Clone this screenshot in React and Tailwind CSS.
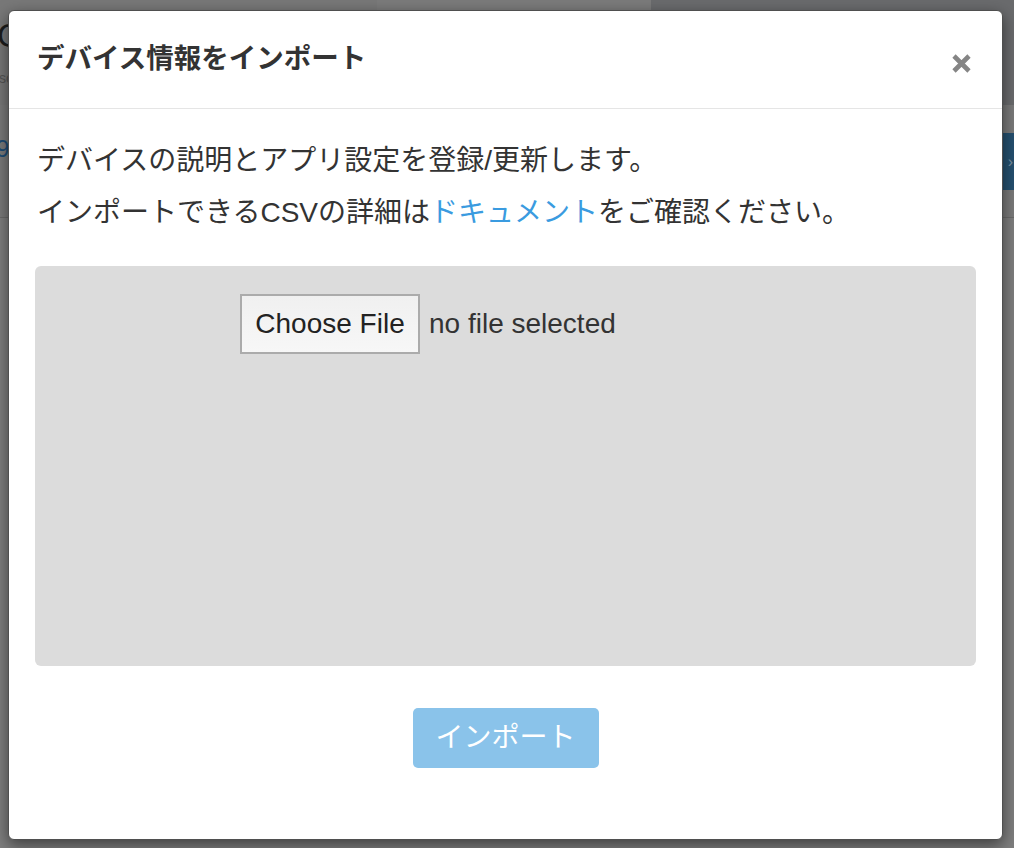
import React from "react";

const jp = "font-['Liberation_Sans','Noto_Sans_CJK_JP',sans-serif]";

function CloseIcon() {
  return (
    <svg width="21" height="21" viewBox="0 0 21 21" aria-hidden="true">
      <path d="M3 3 L18 18 M18 3 L3 18" stroke="#858585" strokeWidth="4.6" strokeLinecap="butt" />
    </svg>
  );
}

function BackdropPage() {
  return (
    <div className={`flex h-full w-full flex-col bg-[#7c7c7c] ${jp}`}>
      {/* top header strip */}
      <div className="flex h-[105px] shrink-0">
        <div className="flex w-[377px] flex-col bg-[#787878] pt-[18px]">
          <span className="-ml-[3px] text-[34px] leading-[34px] text-[#1c1c1c]">C</span>
          <span className="-ml-[1px] mt-[18px] text-[14px] leading-[16px] text-[#555]">sc</span>
        </div>
        <div className="w-[274px] bg-[#7b7b7b]" />
        <div className="flex-1 bg-[#6a6b6d]" />
      </div>
      {/* toolbar row */}
      <div className="flex h-[113px] shrink-0 items-start justify-between border-b border-[#6a6a6a] bg-[#7a7a7a]">
        <span className="-ml-[4px] mt-[29px] text-[24px] leading-[30px] text-[#1d4d75]">9</span>
        <div className="mt-[28px] flex h-[57px] w-[60px] items-center justify-end bg-[#25506f] pr-[1px] text-[16px] text-[#7a8fa0]">
          ›
        </div>
      </div>
      <div className="flex-1 bg-[#7e7e7e]" />
    </div>
  );
}

function ImportModal() {
  return (
    <div
      className={`absolute left-[8px] top-[10px] flex h-[830px] w-[995px] flex-col rounded-[6px] border border-[#4f4f4f] bg-white shadow-[0_5px_15px_rgba(0,0,0,0.5)] ${jp}`}
    >
      {/* header */}
      <div className="flex h-[98px] shrink-0 items-start justify-between border-b border-[#e5e5e5] pl-[28px] pr-[30px]">
        <h4 className="mt-[28px] text-[27.5px] font-bold leading-[40px] text-[#333]">
          デバイス情報をインポート
        </h4>
        <button className="mt-[42px] flex h-[21px] w-[21px] items-center justify-center">
          <CloseIcon />
        </button>
      </div>

      {/* body */}
      <div className="flex flex-col px-[26px] pt-[26px]">
        <p className="pl-[2px] text-[28px] leading-[52px] text-[#333]">
          デバイスの説明とアプリ設定を登録/更新します。
        </p>
        <p className="pl-[2px] text-[28px] leading-[52px] text-[#333]">
          インポートできるCSVの詳細は
          <a className="text-[#3a9be0]">ドキュメント</a>
          をご確認ください。
        </p>

        <div className="mt-[27px] h-[400px] rounded-[6px] bg-[#dcdcdc] pl-[205px] pt-[28px]">
          <div className="flex items-center font-['Liberation_Sans',sans-serif]">
            <span className="flex h-[60px] w-[180px] items-center justify-center border-2 border-[#ababab] bg-gradient-to-b from-[#f0f0f0] to-[#f7f7f7] text-[28px] text-[#222]">
              Choose File
            </span>
            <span className="ml-[9px] text-[28px] text-[#333]">no file selected</span>
          </div>
        </div>
      </div>

      {/* footer */}
      <div className="flex justify-center pt-[42px]">
        <button className="flex h-[60px] w-[186px] items-center justify-center rounded-[5px] bg-[#8ac3ea] text-[28px] text-white">
          インポート
        </button>
      </div>
    </div>
  );
}

export default function App() {
  return (
    <div className="relative h-[848px] w-[1014px] overflow-hidden">
      <BackdropPage />
      <ImportModal />
    </div>
  );
}
